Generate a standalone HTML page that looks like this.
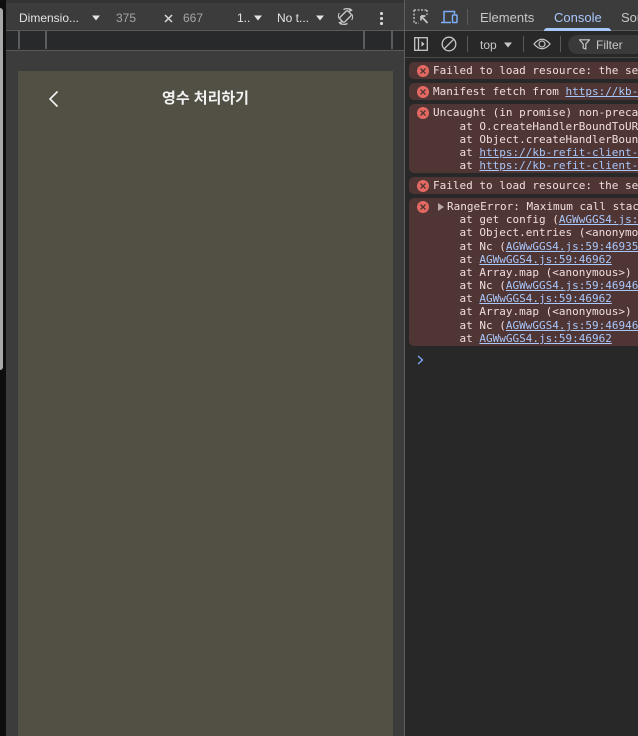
<!DOCTYPE html>
<html><head><meta charset="utf-8">
<style>
html,body{margin:0;padding:0;background:#282828;}
#r{position:relative;width:638px;height:736px;overflow:hidden;background:#282828;font-family:"Liberation Sans",sans-serif;}
#r div,#r svg,#r span.a{position:absolute;}
.t{white-space:pre;font-size:12px;line-height:14px;color:#e3e3e3;}
.tab{font-size:13px;}
.m{position:absolute;left:433px;white-space:pre;font:11px/13px "DejaVu Sans Mono","Liberation Mono",monospace;color:#f0dedc;width:205px;overflow:hidden;}
.m u{color:#a8c7fa;text-decoration:underline;}
.row{left:409px;width:240px;background:#4f3534;border-radius:5px;}
</style></head><body>
<div id="r">
<!-- left device pane -->
<div style="left:0;top:0;width:405px;height:736px;background:#3c3c3c"></div>
<div style="left:0;top:0;width:6px;height:736px;background:#0e0e0e"></div>
<div style="left:0;top:8px;width:3px;height:362px;background:#a9a9a9;border-radius:0 3px 3px 0"></div>
<div style="left:6px;top:0;width:399px;height:3px;background:#333"></div>
<div style="left:6px;top:30px;width:399px;height:1px;background:#5a5a5a"></div>
<div style="left:6px;top:31px;width:398px;height:19px;background:#28292b"></div>
<div style="left:6px;top:50px;width:398px;height:1px;background:#5a5a5a"></div>
<div style="left:18px;top:31px;width:2px;height:18px;background:#5c5c5c"></div>
<div style="left:45px;top:31px;width:2px;height:18px;background:#5c5c5c"></div>
<div style="left:363px;top:31px;width:2px;height:18px;background:#5c5c5c"></div>
<div style="left:391px;top:31px;width:2px;height:18px;background:#5c5c5c"></div>
<div class="t" style="left:19px;top:11px;">Dimensio...</div>
<svg style="left:92px;top:15px" width="8" height="6"><path d="M0 0.500H8L4 5.500Z" fill="#e3e3e3"/></svg>
<div class="t" style="left:116px;top:11px;color:#a5a5a5">375</div>
<svg style="left:164px;top:14px" width="9" height="9"><path d="M1 1L8 8M8 1L1 8" stroke="#d8d8d8" stroke-width="1.500"/></svg>
<div class="t" style="left:183px;top:11px;color:#a5a5a5">667</div>
<div class="t" style="left:237px;top:11px;">1..</div>
<svg style="left:254px;top:15px" width="8" height="6"><path d="M0 0.500H8L4 5.500Z" fill="#e3e3e3"/></svg>
<div class="t" style="left:277px;top:11px;">No t...</div>
<svg style="left:316px;top:15px" width="8" height="6"><path d="M0 0.500H8L4 5.500Z" fill="#e3e3e3"/></svg>
<svg style="left:336px;top:7px" width="19" height="19" viewBox="0 0 19 19" fill="none" stroke="#cfcfcf" stroke-width="1.300"><rect x="6.200" y="3.800" width="6.600" height="11.400" rx="1.500" transform="rotate(45 9.500 9.500)"/><path d="M7.500 2.500Q11.500 0.500 15 3M13.500 1.500L15.500 3.300L13 4.300"/><path d="M11.500 16.500Q7.500 18.500 4 16M5.500 17.500L3.500 15.700L6 14.700"/><path d="M2.800 11.500Q1.800 8.500 3.300 6M16.200 7.500Q17.200 10.500 15.700 13" stroke-width="1"/></svg>
<div style="left:380px;top:12px;width:2.500px;height:2.500px;background:#d8d8d8;border-radius:50%"></div>
<div style="left:380px;top:17px;width:2.500px;height:2.500px;background:#d8d8d8;border-radius:50%"></div>
<div style="left:380px;top:22px;width:2.500px;height:2.500px;background:#d8d8d8;border-radius:50%"></div>
<!-- page -->
<div style="left:18px;top:71px;width:375px;height:665px;background:#524f44"></div>
<svg style="left:47px;top:90px" width="13" height="18" viewBox="0 0 13 18" fill="none"><path d="M10.500 1.500L3 9L10.500 16.500" stroke="#f4f4f4" stroke-width="1.600"/></svg>
<div style="left:18px;top:89px;width:375px;text-align:center;font:700 15px/19px 'Liberation Sans','Noto Sans CJK KR',sans-serif;color:#f2f2f2;">영수 처리하기</div>
<!-- devtools -->
<div style="left:404px;top:0;width:1px;height:736px;background:#5f5f5f"></div>
<div style="left:405px;top:0;width:233px;height:30px;background:#3c3c3c"></div>
<div style="left:405px;top:30px;width:233px;height:1px;background:#5a5a5a"></div>
<div style="left:405px;top:57px;width:233px;height:1px;background:#4a4a4a"></div>
<svg style="left:413px;top:9px" width="16" height="16" viewBox="0 0 16 16" fill="none" stroke="#c7c7c7" stroke-width="1.300"><path d="M1 1H14M1 1V14H6M14 1V6" stroke-dasharray="2 1.500"/><path d="M8 7L14.500 14M8 7H12.500M8 7V11.500" stroke-width="1.700"/></svg>
<svg style="left:441px;top:10px" width="17" height="14" viewBox="0 0 17 14" fill="none" stroke="#7cacf8" stroke-width="1.500"><path d="M3 12V1.500H13.500V4M0 12.500H10"/><rect x="11.500" y="5" width="4.500" height="7.500" rx="0.500"/></svg>
<div style="left:467px;top:9px;width:1px;height:16px;background:#5a5a5a"></div>
<div class="t tab" style="left:480px;top:11px;color:#c7c7c7">Elements</div>
<div class="t tab" style="left:554px;top:11px;color:#a8c7fa">Console</div>
<div style="left:544px;top:28px;width:67px;height:3px;background:#a8c7fa;border-radius:3px 3px 0 0"></div>
<div class="t tab" style="left:621px;top:11px;color:#c7c7c7">Sou</div>
<svg style="left:414px;top:37px" width="14" height="14" viewBox="0 0 14 14" fill="none" stroke="#c7c7c7" stroke-width="1.300"><rect x="0.700" y="0.700" width="12.600" height="12.600"/><path d="M4.500 1V13"/><path d="M7.500 4.300L10.500 7L7.500 9.700Z" fill="#c7c7c7" stroke="none"/></svg>
<svg style="left:441px;top:36px" width="16" height="16" viewBox="0 0 16 16" fill="none" stroke="#c7c7c7" stroke-width="1.300"><circle cx="8" cy="8" r="6.800"/><path d="M3.200 12.800L12.800 3.200"/></svg>
<div style="left:467px;top:36px;width:1px;height:16px;background:#5a5a5a"></div>
<div class="t" style="left:480px;top:38px;color:#c7c7c7">top</div>
<svg style="left:504px;top:42px" width="8" height="6"><path d="M0 0.500H8L4 5.500Z" fill="#c7c7c7"/></svg>
<div style="left:523px;top:36px;width:1px;height:16px;background:#5a5a5a"></div>
<svg style="left:533px;top:38px" width="18" height="12" viewBox="0 0 18 12" fill="none" stroke="#c7c7c7" stroke-width="1.200"><path d="M1 6Q9 -3.500 17 6Q9 15.500 1 6Z"/><circle cx="9" cy="6" r="3"/></svg>
<div style="left:560px;top:36px;width:1px;height:16px;background:#5a5a5a"></div>
<div style="left:568px;top:35px;width:90px;height:19px;background:#3a3a3a;border-radius:10px"></div>
<svg style="left:579px;top:39px" width="11" height="11" viewBox="0 0 11 11" fill="none" stroke="#c7c7c7" stroke-width="1.200"><path d="M0.500 0.800H10.500L6.800 5V10L4.200 9V5Z"/></svg>
<div class="t" style="left:596px;top:38px;color:#c7c7c7">Filter</div>
<!-- rows -->
<div class="row" style="top:62px;height:17px"></div>
<div class="row" style="top:83px;height:17px"></div>
<div class="row" style="top:104px;height:69px"></div>
<div class="row" style="top:177px;height:17px"></div>
<div class="row" style="top:198px;height:148px"></div>
<svg style="left:417px;top:65px" width="12" height="12"><circle cx="6" cy="6" r="6" fill="#e46962"/><path d="M3.500 3.500L8.500 8.500M8.500 3.500L3.500 8.500" stroke="#4f3534" stroke-width="1.300"/></svg>
<svg style="left:417px;top:86px" width="12" height="12"><circle cx="6" cy="6" r="6" fill="#e46962"/><path d="M3.500 3.500L8.500 8.500M8.500 3.500L3.500 8.500" stroke="#4f3534" stroke-width="1.300"/></svg>
<svg style="left:417px;top:107px" width="12" height="12"><circle cx="6" cy="6" r="6" fill="#e46962"/><path d="M3.500 3.500L8.500 8.500M8.500 3.500L3.500 8.500" stroke="#4f3534" stroke-width="1.300"/></svg>
<svg style="left:417px;top:180px" width="12" height="12"><circle cx="6" cy="6" r="6" fill="#e46962"/><path d="M3.500 3.500L8.500 8.500M8.500 3.500L3.500 8.500" stroke="#4f3534" stroke-width="1.300"/></svg>
<svg style="left:417px;top:201px" width="12" height="12"><circle cx="6" cy="6" r="6" fill="#e46962"/><path d="M3.500 3.500L8.500 8.500M8.500 3.500L3.500 8.500" stroke="#4f3534" stroke-width="1.300"/></svg>
<svg style="left:438px;top:203px" width="6" height="8"><path d="M0 0L6 4L0 8Z" fill="#b8a8a6"/></svg>
<span class="m" style="top:64px">Failed to load resource: the server</span>
<span class="m" style="top:85px">Manifest fetch from <u>https://kb-refit</u></span>
<span class="m" style="top:106px">Uncaught (in promise) non-precached</span>
<span class="m" style="top:120px">    at O.createHandlerBoundToURL</span>
<span class="m" style="top:133px">    at Object.createHandlerBoundToURL</span>
<span class="m" style="top:146px">    at <u>https://kb-refit-client-dev</u></span>
<span class="m" style="top:159px">    at <u>https://kb-refit-client-dev</u></span>
<span class="m" style="top:179px">Failed to load resource: the server</span>
<span class="m" style="top:200px;left:447px;width:191px">RangeError: Maximum call stack</span>
<span class="m" style="top:213px">    at get config (<u>AGWwGGS4.js:59</u></span>
<span class="m" style="top:226px">    at Object.entries (&lt;anonymous&gt;)</span>
<span class="m" style="top:240px">    at Nc (<u>AGWwGGS4.js:59:46935</u>)</span>
<span class="m" style="top:253px">    at <u>AGWwGGS4.js:59:46962</u></span>
<span class="m" style="top:266px">    at Array.map (&lt;anonymous&gt;)</span>
<span class="m" style="top:279px">    at Nc (<u>AGWwGGS4.js:59:46946</u>)</span>
<span class="m" style="top:292px">    at <u>AGWwGGS4.js:59:46962</u></span>
<span class="m" style="top:305px">    at Array.map (&lt;anonymous&gt;)</span>
<span class="m" style="top:319px">    at Nc (<u>AGWwGGS4.js:59:46946</u>)</span>
<span class="m" style="top:332px">    at <u>AGWwGGS4.js:59:46962</u></span>
<svg style="left:417px;top:355px" width="7" height="10" fill="none"><path d="M1 1L5.500 5L1 9" stroke="#7cacf8" stroke-width="1.300"/></svg>
</div>
</body></html>
